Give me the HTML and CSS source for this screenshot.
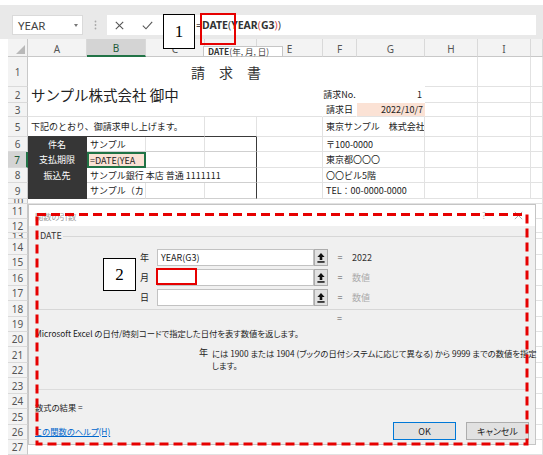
FILE: index.html
```html
<!DOCTYPE html>
<html lang="ja">
<head>
    <meta charset="UTF-8">
    <meta name="viewport" content="width=device-width, initial-scale=1.0">
    <title>関数の引数 - DATE</title>
    <link rel="stylesheet" href="styles.css">
</head>
<body>

<div class="ribbon-edge"></div>

<!-- 数式バー -->
<div class="formula-bar">
    <div class="name-box">YEAR<span class="name-arrow"></span></div>
    <div class="grip">
        <svg width="3" height="10" viewBox="0 0 3 10"><circle cx="1.5" cy="1.5" r="0.9" fill="#a8a8a8"/><circle cx="1.5" cy="5" r="0.9" fill="#a8a8a8"/><circle cx="1.5" cy="8.5" r="0.9" fill="#a8a8a8"/></svg>
    </div>
    <div class="formula-input">
        <span class="fx-btn fx-cancel">
            <svg width="9" height="9" viewBox="0 0 9 9"><path d="M0.8 0.8 L8.2 8.2 M8.2 0.8 L0.8 8.2" stroke="#555" stroke-width="1.1"/></svg>
        </span>
        <span class="fx-btn fx-enter">
            <svg width="11" height="9" viewBox="0 0 11 9"><path d="M0.8 4.6 L4 7.8 L10.2 0.8" stroke="#555" stroke-width="1.1" fill="none"/></svg>
        </span>
        <span class="formula-text">=<b>DATE</b>(<b>YEAR</b><span class="paren">(</span><b>G3</b><span class="paren">)</span>)</span>
    </div>
</div>

<!-- シート -->
<div class="sheet">
    <div class="corner"><span class="corner-tri"></span></div>
    <div class="col-hdr">A</div>
    <div class="col-hdr sel">B</div>
    <div class="col-hdr">C</div>
    <div class="col-hdr"></div>
    <div class="col-hdr">E</div>
    <div class="col-hdr">F</div>
    <div class="col-hdr">G</div>
    <div class="col-hdr">H</div>
    <div class="col-hdr">I</div>
    <div class="col-hdr"></div>

    <div class="row-hdr">1</div>
    <div class="cell blank span7 title">請　求　書</div>
    <div class="cell"></div><div class="cell"></div><div class="cell"></div>

    <div class="row-hdr">2</div>
    <div class="cell blank span5 client">サンプル株式会社 御中</div>
    <div class="cell blank center">請求No.</div>
    <div class="cell blank right">1</div>
    <div class="cell"></div><div class="cell"></div><div class="cell"></div>

    <div class="row-hdr">3</div>
    <div class="cell blank under span5"></div>
    <div class="cell blank under center">請求日</div>
    <div class="cell blank under right peach">2022/10/7</div>
    <div class="cell"></div><div class="cell"></div><div class="cell"></div>

    <div class="row-hdr">5</div>
    <div class="cell span3 box-above">下記のとおり、御請求申し上げます。</div>
    <div class="cell box-above"></div>
    <div class="cell"></div>
    <div class="cell span2">東京サンプル　株式会社</div>
    <div class="cell"></div><div class="cell"></div><div class="cell"></div>

    <div class="row-hdr">6</div>
    <div class="cell label">件名</div>
    <div class="cell tbl">サンプル</div>
    <div class="cell tbl"></div>
    <div class="cell tbl tbl-end"></div>
    <div class="cell"></div>
    <div class="cell span2">〒100-0000</div>
    <div class="cell"></div><div class="cell"></div><div class="cell"></div>

    <div class="row-hdr sel">7</div>
    <div class="cell label">支払期限</div>
    <div class="cell tbl active">=DATE(YEA</div>
    <div class="cell tbl"></div>
    <div class="cell tbl tbl-end"></div>
    <div class="cell"></div>
    <div class="cell span2">東京都〇〇〇</div>
    <div class="cell"></div><div class="cell"></div><div class="cell"></div>

    <div class="row-hdr">8</div>
    <div class="cell label">振込先</div>
    <div class="cell tbl tbl-end span3">サンプル銀行 本店 普通 1111111</div>
    <div class="cell"></div>
    <div class="cell span2">〇〇ビル5階</div>
    <div class="cell"></div><div class="cell"></div><div class="cell"></div>

    <div class="row-hdr">9</div>
    <div class="cell label box-below"></div>
    <div class="cell tbl box-below">サンプル（カ</div>
    <div class="cell tbl box-below"></div>
    <div class="cell tbl tbl-end box-below"></div>
    <div class="cell"></div>
    <div class="cell span2">TEL：00-0000-0000</div>
    <div class="cell"></div><div class="cell"></div><div class="cell"></div>

    <div class="row-hdr">10</div><div class="cell span10"></div>
    <div class="row-hdr">11</div><div class="cell span10"></div>
    <div class="row-hdr">12</div><div class="cell span10"></div>
    <div class="row-hdr">13</div><div class="cell span10"></div>
    <div class="row-hdr">14</div><div class="cell span10"></div>
    <div class="row-hdr">15</div><div class="cell span10"></div>
    <div class="row-hdr">16</div><div class="cell span10"></div>
    <div class="row-hdr">17</div><div class="cell span10"></div>
    <div class="row-hdr">18</div><div class="cell span10"></div>
    <div class="row-hdr">19</div><div class="cell span10"></div>
    <div class="row-hdr">20</div><div class="cell span10"></div>
    <div class="row-hdr">21</div><div class="cell span10"></div>
    <div class="row-hdr">22</div><div class="cell span10"></div>
    <div class="row-hdr">23</div><div class="cell span10"></div>
    <div class="row-hdr">24</div><div class="cell span10"></div>
    <div class="row-hdr">25</div><div class="cell span10"></div>
    <div class="row-hdr">26</div><div class="cell span10"></div>
    <div class="row-hdr">27</div><div class="cell span10"></div>
</div>

<!-- 引数ヒント -->
<div class="tip"><b>DATE</b>(年, 月, 日)</div>

<!-- 関数の引数ダイアログ -->
<div class="dialog">
    <div class="dlg-title">
        <span class="dlg-caption">関数の引数</span>
        <span class="dlg-ctrl">?</span>
        <span class="dlg-ctrl dlg-close">
            <svg width="9" height="9" viewBox="0 0 9 9"><path d="M0.8 0.8 L8.2 8.2 M8.2 0.8 L0.8 8.2" stroke="#b0b0b0" stroke-width="1"/></svg>
        </span>
    </div>
    <div class="dlg-body">
        <fieldset class="args">
            <legend>DATE</legend>
            <div class="arg-row">
                <span class="arg-name">年</span>
                <span class="arg-input">YEAR(G3)</span>
                <span class="arg-pick"><svg width="8" height="10" viewBox="0 0 8 10"><path d="M4 0 L7.6 4 H5.3 V7 H2.7 V4 H0.4 Z" fill="#111"/><rect x="0.4" y="8.2" width="7.2" height="1.5" fill="#111"/></svg></span>
                <span class="arg-eq">=</span>
                <span class="arg-val">2022</span>
            </div>
            <div class="arg-row">
                <span class="arg-name">月</span>
                <span class="arg-input"></span>
                <span class="arg-pick"><svg width="8" height="10" viewBox="0 0 8 10"><path d="M4 0 L7.6 4 H5.3 V7 H2.7 V4 H0.4 Z" fill="#111"/><rect x="0.4" y="8.2" width="7.2" height="1.5" fill="#111"/></svg></span>
                <span class="arg-eq">=</span>
                <span class="arg-val muted">数値</span>
            </div>
            <div class="arg-row">
                <span class="arg-name">日</span>
                <span class="arg-input"></span>
                <span class="arg-pick"><svg width="8" height="10" viewBox="0 0 8 10"><path d="M4 0 L7.6 4 H5.3 V7 H2.7 V4 H0.4 Z" fill="#111"/><rect x="0.4" y="8.2" width="7.2" height="1.5" fill="#111"/></svg></span>
                <span class="arg-eq">=</span>
                <span class="arg-val muted">数値</span>
            </div>
        </fieldset>

        <div class="result-eq">=</div>
        <p class="desc">Microsoft Excel の日付/時刻コードで指定した日付を表す数値を返します。</p>

        <div class="param">
            <span class="param-name">年</span>
            <p class="param-text">には 1900 または 1904 (ブックの日付システムに応じて異なる) から 9999 までの数値を指定<br>します。</p>
        </div>

        <div class="formula-result">数式の結果 =</div>

        <div class="dlg-foot">
            <a class="help">この関数のヘルプ(H)</a>
            <button class="btn btn-default">OK</button>
            <button class="btn">キャンセル</button>
        </div>
    </div>
</div>

<!-- 注釈 -->
<div class="marker marker-1">1</div>
<div class="hilite hilite-1"></div>
<div class="marker marker-2">2</div>
<div class="hilite hilite-2"></div>
<svg class="dash-frame" width="494" height="234" viewBox="0 0 494 234">
    <rect x="2" y="1.5" width="490" height="229.5" fill="none" stroke="#e60000" stroke-width="3" stroke-dasharray="9 5"/>
</svg>

</body>
</html>
```

FILE: styles.css
```css
* {
    margin: 0;
    padding: 0;
    box-sizing: border-box;
}

body {
    position: relative;
    width: 543px;
    height: 455px;
    overflow: hidden;
    background: #fff;
    color: #222;
    font-family: "Noto Sans CJK JP", "Noto Sans", sans-serif;
}

/* 数式バー */
.ribbon-edge {
    height: 5px;
    background: #fff;
}

.formula-bar {
    display: flex;
    height: 34px;
    padding: 10px 7px 0 12px;
    background: #e9e9e9;
}

.name-box {
    display: flex;
    align-items: center;
    justify-content: space-between;
    width: 71px;
    height: 20px;
    padding: 0 4px 0 5px;
    background: #fff;
    border: 1px solid #dadada;
    font-family: "Noto Sans", sans-serif;
    font-size: 11.5px;
    color: #444;
}

.name-arrow {
    width: 0;
    height: 0;
    border-left: 2.5px solid transparent;
    border-right: 2.5px solid transparent;
    border-top: 3px solid #777;
}

.grip {
    display: flex;
    align-items: center;
    justify-content: center;
    width: 24px;
    height: 20px;
}

.formula-input {
    display: flex;
    align-items: center;
    flex: 1;
    height: 20px;
    background: #fff;
}

.fx-btn {
    display: flex;
    align-items: center;
    justify-content: center;
    height: 20px;
}

.fx-cancel {
    width: 24px;
}

.fx-enter {
    width: 32px;
}

.formula-text {
    margin-left: 33px;
    font-family: "Noto Sans", sans-serif;
    font-size: 10.5px;
    color: #444;
}

.formula-text b {
    color: #333;
}

.formula-text .paren {
    color: #d9534f;
}

/* シート */
.sheet {
    display: grid;
    grid-template-columns: 20px 59px 59px 59px 52px 66px 34px 68px 53px 53px 12px;
    grid-template-rows: 18px 30px 16px 14px 20px 15px 16px 15px 16px 5px 15px 14px 6px 16px 15px 16px 15px 16px 15px 15px 16px 15px 16px 15px 16px 15px 15px;
    margin-left: 8px;
    font-size: 9px;
}

.corner {
    display: flex;
    align-items: flex-end;
    justify-content: flex-end;
    padding: 0 2px 2px 0;
    background: #f3f3f3;
    border-right: 1px solid #c8c8c8;
    border-bottom: 1px solid #c8c8c8;
}

.corner-tri {
    width: 0;
    height: 0;
    border-left: 9px solid transparent;
    border-bottom: 9px solid #b9b9b9;
}

.col-hdr {
    display: flex;
    align-items: center;
    justify-content: center;
    padding-top: 2px;
    background: #f3f3f3;
    border-right: 1px solid #d9d9d9;
    border-bottom: 1px solid #c8c8c8;
    font-family: "Noto Sans", sans-serif;
    font-size: 10px;
    color: #555;
}

.col-hdr.sel {
    background: #d4d4d4;
    border-bottom: 2px solid #217346;
    color: #1d5a38;
}

.row-hdr {
    display: flex;
    align-items: center;
    justify-content: center;
    overflow: hidden;
    background: #f3f3f3;
    border-right: 1px solid #c8c8c8;
    border-bottom: 1px solid #dadada;
    font-family: "Noto Sans", sans-serif;
    font-size: 10px;
    color: #555;
}

.row-hdr.sel {
    background: #d4d4d4;
    border-right: 2px solid #217346;
    color: #1d5a38;
}

.cell {
    display: flex;
    align-items: center;
    padding: 0 3px;
    overflow: hidden;
    white-space: nowrap;
    border-right: 1px solid #e2e2e2;
    border-bottom: 1px solid #e2e2e2;
}

.span2 { grid-column: span 2; }
.span3 { grid-column: span 3; }
.span5 { grid-column: span 5; }
.span7 { grid-column: span 7; }
.span10 { grid-column: span 10; }

.blank {
    border-right-color: transparent;
    border-bottom-color: transparent;
}

.blank.under {
    border-bottom-color: #e2e2e2;
}

.center {
    justify-content: center;
    padding: 0;
}

.right {
    justify-content: flex-end;
    padding: 0 2px 0 0;
}

.peach {
    background: #fbe2d5;
    padding-right: 1px;
}

.title {
    justify-content: center;
    font-size: 14px;
    color: #333;
}

.client {
    overflow: visible;
    font-size: 14.5px;
    line-height: 16px;
}

.box-above {
    border-bottom-color: #3a3a3a;
}

.box-below {
    border-bottom-color: #3a3a3a;
}

.label {
    justify-content: center;
    background: #363636;
    border-right-color: #363636;
    border-bottom-color: #363636;
    color: #fff;
}

.tbl {
    border-bottom-color: #cfcfcf;
}

.tbl-end {
    border-right-color: #3a3a3a;
}

.active {
    background: #fbe2d5;
    border: 2px solid #217346;
    padding-left: 1px;
}

/* 引数ヒント */
.tip {
    position: absolute;
    left: 203px;
    top: 46px;
    width: 80px;
    height: 11px;
    padding-left: 4px;
    background: #fff;
    border: 1px solid #c6c6c6;
    font-family: "Noto Sans CJK JP", sans-serif;
    font-size: 8.5px;
    line-height: 9px;
    color: #444;
    white-space: nowrap;
}

.tip b {
    color: #333;
}

/* ダイアログ */
.dialog {
    position: absolute;
    left: 28px;
    top: 204px;
    width: 508px;
    height: 241px;
    background: #f0f0f0;
    border: 1px solid #c5c5c5;
    font-size: 8.3px;
    font-feature-settings: "palt";
}

.dlg-title {
    display: flex;
    align-items: center;
    height: 21px;
    padding: 0 12px 0 6px;
    background: #fff;
}

.dlg-caption {
    flex: 1;
    color: #a0a0a0;
}

.dlg-ctrl {
    display: flex;
    justify-content: center;
    width: 10px;
    color: #b0b0b0;
    font-family: "Noto Sans", sans-serif;
}

.dlg-close {
    margin-left: 24px;
}

.dlg-body {
    padding: 0 6px 0 6px;
    line-height: 12px;
}

.args {
    margin: 4px 0 0 1px;
    padding: 7px 0 3px;
    border: none;
    border-top: 1px solid #d7d7d7;
    border-bottom: 1px solid #d7d7d7;
}

.args legend {
    margin-left: 3px;
    padding: 0 1px;
    font-size: 9px;
    color: #333;
}

.arg-row {
    display: grid;
    grid-template-columns: 121px 157px 14px 24px 1fr;
    align-items: center;
    height: 17px;
    font-size: 9px;
}

.arg-row + .arg-row {
    margin-top: 3px;
}

.arg-name {
    padding-right: 8px;
    text-align: right;
}

.arg-input {
    height: 17px;
    padding-left: 3px;
    background: #fff;
    border: 1px solid #c2c2c2;
    line-height: 15px;
    color: #222;
}

.arg-pick {
    display: flex;
    align-items: center;
    justify-content: center;
    height: 17px;
    background: #e1e1e1;
    border: 1px solid #adadad;
}

.arg-eq {
    text-align: center;
    color: #555;
}

.arg-val {
    color: #333;
}

.arg-val.muted {
    color: #aaa;
}

.result-eq {
    margin-top: 3px;
    padding-left: 302px;
    font-size: 9px;
    color: #555;
}

.desc {
    margin-top: 2px;
    white-space: nowrap;
}

.param {
    display: grid;
    grid-template-columns: 173px 1fr;
    column-gap: 4px;
    margin-top: 8px;
}

.param-name {
    font-size: 9px;
    text-align: right;
}

.param-text {
    white-space: nowrap;
}

.formula-result {
    margin-top: 18px;
    padding-top: 11px;
    border-top: 1px solid #dcdcdc;
}

.dlg-foot {
    display: flex;
    align-items: center;
    margin-top: 9px;
}

.help {
    flex: 1;
    color: #0066cc;
    text-decoration: underline;
}

.btn {
    height: 18px;
    background: #e1e1e1;
    border: 1px solid #adadad;
    font-family: inherit;
    font-size: 9px;
    font-feature-settings: "palt";
    color: #222;
}

.btn-default {
    width: 63px;
    margin-right: 10px;
    border-color: #0078d7;
}

.btn + .btn {
    width: 63px;
}

/* 注釈 */
.marker {
    position: absolute;
    display: flex;
    align-items: center;
    justify-content: center;
    background: #fff;
    border: 1px solid #000;
    font-family: "Liberation Serif", serif;
    font-size: 17px;
    color: #000;
}

.marker-1 {
    left: 163px;
    top: 14px;
    width: 32px;
    height: 35px;
}

.marker-2 {
    left: 103px;
    top: 258px;
    width: 33px;
    height: 33px;
}

.hilite {
    position: absolute;
    border: 2px solid #e60000;
}

.hilite-1 {
    left: 200px;
    top: 13px;
    width: 36px;
    height: 32px;
}

.hilite-2 {
    left: 156px;
    top: 268px;
    width: 41px;
    height: 17px;
}

.dash-frame {
    position: absolute;
    left: 35px;
    top: 213px;
}
```
